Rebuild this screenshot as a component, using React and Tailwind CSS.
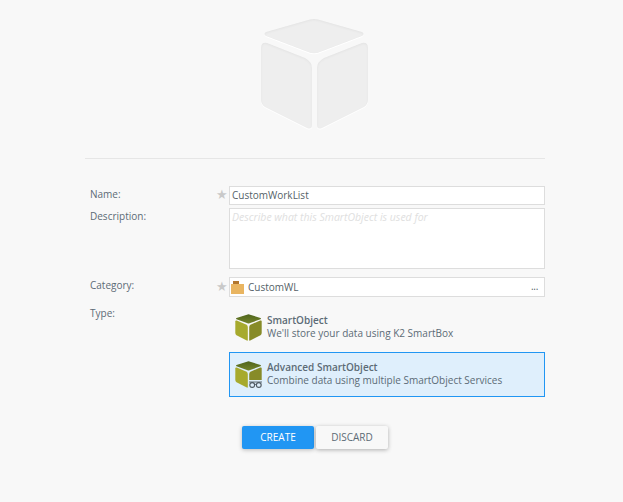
import React from "react";

const font = "font-['Open_Sans',sans-serif]";

const cubeFaces = [
  "M11 17 L55 4.5 Q59 3.5 63 4.5 L107 17 Q110 19 107 21 L65 37 Q59 39.5 53 37 L11 21 Q8 19 11 17 Z",
  "M6 33 Q6 27 12 28 L50 43 Q57 47 57 53 L57 110 Q57 115 52 113 L10 92 Q6 89 6 85 Z",
  "M113 33 Q113 27 107 28 L69 43 Q62 47 62 53 L62 110 Q62 115 67 113 L109 92 Q113 89 113 85 Z",
];

const HeroCube = () => (
  <svg width="120" height="120" viewBox="0 0 120 120">
    <defs>
      <filter id="inner" x="-10%" y="-10%" width="120%" height="120%">
        <feOffset dy="1" />
        <feGaussianBlur stdDeviation="1" result="blur" />
        <feComposite in="SourceGraphic" in2="blur" operator="out" result="edge" />
        <feFlood floodColor="#000000" floodOpacity="0.1" />
        <feComposite in2="edge" operator="in" result="shade" />
        <feMerge>
          <feMergeNode in="SourceGraphic" />
          <feMergeNode in="shade" />
        </feMerge>
      </filter>
    </defs>
    <g fill="#ffffff" transform="translate(0 1)">
      {cubeFaces.map((d) => (
        <path key={d} d={d} />
      ))}
    </g>
    <g fill="#eeeeee" filter="url(#inner)">
      {cubeFaces.map((d) => (
        <path key={d} d={d} />
      ))}
    </g>
  </svg>
);

// 27px olive cube, the advanced one wears glasses
const SmallCube = ({ glasses, id }) => (
  <svg width="27" height="27" viewBox="0 0 27 27" className="shrink-0">
    <defs>
      <linearGradient id={id} x1="0" y1="0" x2="0" y2="1">
        <stop offset="0" stopColor="#4f651d" />
        <stop offset="1" stopColor="#74842a" />
      </linearGradient>
    </defs>
    <path d="M13.5 0.3 L25.5 4 Q26.5 4.6 25.5 5.2 L14.5 9.3 Q13.5 9.7 12.5 9.3 L1.5 5.2 Q0.5 4.6 1.5 4 Z" fill={`url(#${id})`} />
    <path d="M0.3 7.5 Q0.3 6 1.8 6.6 L11 10.4 Q12.8 11.2 12.8 13 L12.8 26 Q12.8 27 11.8 26.5 L1.5 21.2 Q0.3 20.5 0.3 19 Z" fill="#a7aa2d" />
    <path d="M26.7 7.5 Q26.7 6 25.2 6.6 L16 10.4 Q14.2 11.2 14.2 13 L14.2 26 Q14.2 27 15.2 26.5 L25.5 21.2 Q26.7 20.5 26.7 19 Z" fill="#878b28" />
    {glasses && (
      <g>
        <rect x="13" y="19" width="14" height="8" fill="#dfeffc" />
        <circle cx="17.2" cy="24" r="2.4" fill="none" stroke="#4f5a63" strokeWidth="1.1" />
        <circle cx="23.8" cy="24" r="2.4" fill="none" stroke="#4f5a63" strokeWidth="1.1" />
        <path d="M14 21 H27 M19.6 23.4 H21.4" stroke="#4f5a63" strokeWidth="0.9" fill="none" />
      </g>
    )}
  </svg>
);

const Folder = () => (
  <svg width="14" height="13" viewBox="0 0 14 13" className="shrink-0">
    <path d="M2 0 H8 V3 H2 Z" fill="#b2772e" />
    <path d="M0 3 H13 V13 H0 Z" fill="#e9b561" />
  </svg>
);

const Star = () => <span className="text-[#c9c9c9] text-[13px] leading-none">★</span>;

const App = () => {
  return (
    <div className={`${font} w-[623px] h-[502px] bg-[#f8f8f8] overflow-hidden text-[10px] text-[#5c6b76]`}>
      <div className="flex justify-center pt-[15px] ml-[7px]">
        <HeroCube />
      </div>

      <div className="ml-[85px] w-[460px] mt-[23px] border-t border-[#e6e6e6] pt-[27px]">
        <div className="grid grid-cols-[127px_17px_316px] items-start">
          {/* Name */}
          <div className="pl-[5px] leading-[16px]">Name:</div>
          <div className="pt-[2px] pl-[4px]"><Star /></div>
          <div className="h-[19px] border border-[#dddddd] bg-white px-[2px] leading-[17px] text-[#555f68]">CustomWorkList</div>

          {/* Description */}
          <div className="pl-[5px] mt-[3px] leading-[16px]">Description:</div>
          <div />
          <div className="h-[61px] mt-[3px] border border-[#dddddd] bg-white px-[2px] leading-[17px] italic text-[10.5px] text-[#e0e0e0]">
            Describe what this SmartObject is used for
          </div>

          {/* Category */}
          <div className="pl-[5px] mt-[8px] leading-[16px]">Category:</div>
          <div className="mt-[11px] pl-[4px]"><Star /></div>
          <div className="h-[20px] mt-[8px] border border-[#dddddd] bg-white pl-[1px] pr-[6px] flex items-center gap-[3px] text-[#555f68]">
            <Folder />
            <span className="flex-1 leading-[17px]">CustomWL</span>
            <span className="text-[10px] leading-none tracking-[-0.3px] pb-[2px]">...</span>
          </div>

          {/* Type */}
          <div className="pl-[5px] mt-[8px] leading-[16px]">Type:</div>
          <div />
          <div className="mt-[8px]">
            <div className="h-[45px] flex items-center gap-[5px] pl-[5px] border border-transparent">
              <SmallCube id="cube-top-a" />
              <div className="leading-[13px] pb-[1px]">
                <div className="font-semibold">SmartObject</div>
                <div>We'll store your data using K2 SmartBox</div>
              </div>
            </div>
            <div className="h-[45px] mt-[2px] flex items-center gap-[5px] pl-[5px] border border-[#2196f3] bg-[#dfeffc]">
              <SmallCube id="cube-top-b" glasses />
              <div className="leading-[13px] pb-[1px]">
                <div className="font-semibold">Advanced SmartObject</div>
                <div>Combine data using multiple SmartObject Services</div>
              </div>
            </div>
          </div>
        </div>

        <div className="flex gap-[2px] ml-[157px] mt-[29px]">
          <button className="w-[72px] h-[23px] pb-[1px] rounded-[2px] bg-[#2196f3] text-white text-[10px] font-medium shadow-[0_1px_4px_rgba(0,0,0,0.25)]">
            CREATE
          </button>
          <button className="w-[72px] h-[23px] pb-[1px] rounded-[2px] bg-[#f8f8f8] text-[#5c6b76] text-[10px] shadow-[0_1px_4px_rgba(0,0,0,0.3)]">
            DISCARD
          </button>
        </div>
      </div>
    </div>
  );
};

export default App;
